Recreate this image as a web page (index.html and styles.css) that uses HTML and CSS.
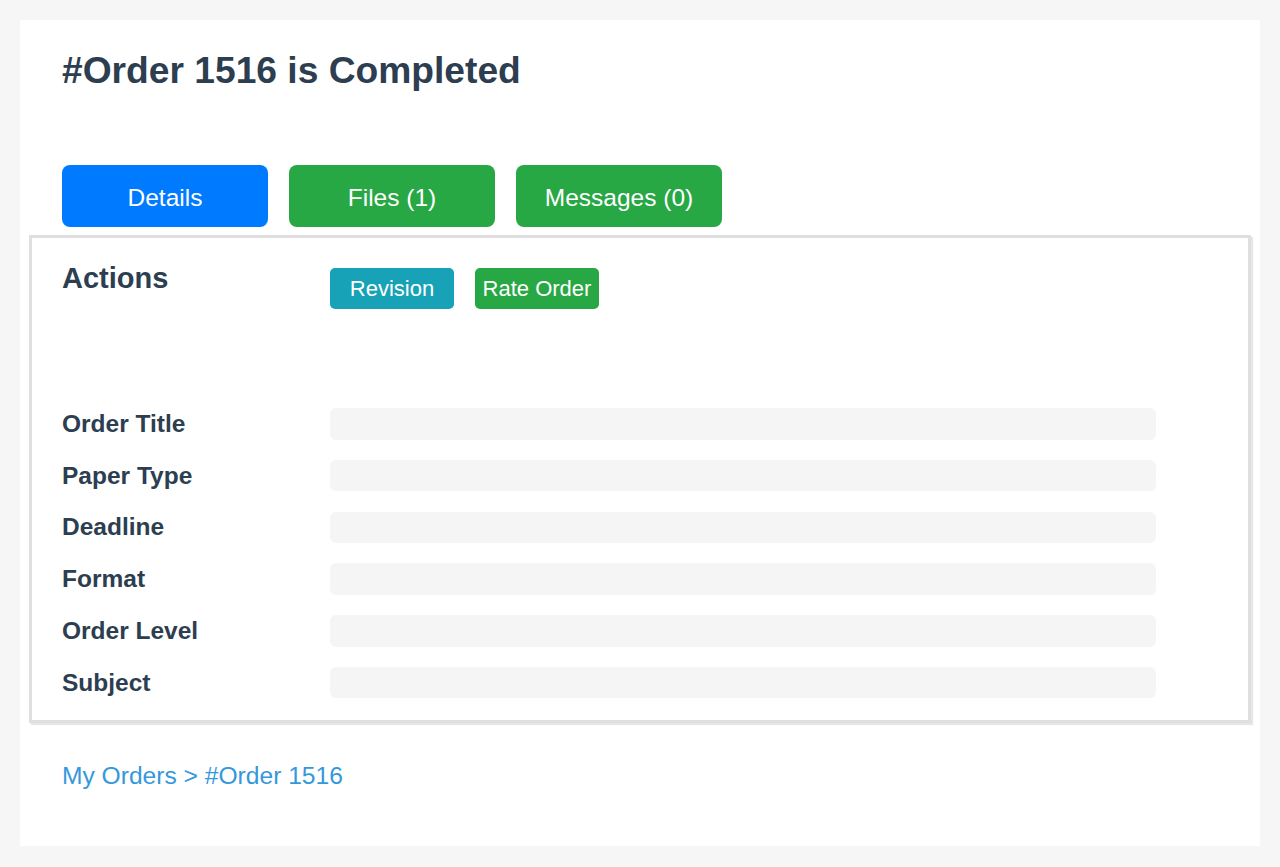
FILE: index.html
```html
<!DOCTYPE html>
<html lang="en">
<head>
<meta charset="utf-8">
<title>#Order 1516 is Completed</title>
<link rel="stylesheet" href="styles.css">
</head>
<body>
<div class="card">
  <h1 class="title">#Order 1516 is Completed</h1>
  <nav class="tabs">
    <a class="tab tab-blue" href="#">Details</a>
    <a class="tab tab-green" href="#">Files (1)</a>
    <a class="tab tab-green" href="#">Messages (0)</a>
  </nav>
  <section class="panel">
    <div class="actions">
      <h2 class="actions-title">Actions</h2>
      <div class="action-buttons">
        <a class="btn btn-teal" href="#">Revision</a>
        <a class="btn btn-green" href="#">Rate Order</a>
      </div>
    </div>
    <div class="rows">
      <div class="row"><span class="label">Order Title</span><span class="value"></span></div>
      <div class="row"><span class="label">Paper Type</span><span class="value"></span></div>
      <div class="row"><span class="label">Deadline</span><span class="value"></span></div>
      <div class="row"><span class="label">Format</span><span class="value"></span></div>
      <div class="row"><span class="label">Order Level</span><span class="value"></span></div>
      <div class="row"><span class="label">Subject</span><span class="value"></span></div>
    </div>
  </section>
  <div class="crumbs"><a href="#">My Orders</a> &gt; <a href="#">#Order 1516</a></div>
</div>
</body>
</html>
```
FILE: styles.css
```css
* { box-sizing: border-box; }
html, body { margin: 0; padding: 0; }
body {
  background: #f6f6f6;
  font-family: "Liberation Sans", Arial, sans-serif;
  color: #2c3e50;
}
.card {
  margin: 20px;
  height: 826px;
  background: #fff;
  padding: 29px 9px 0;
}
.title {
  margin: 0;
  padding-left: 33px;
  font-size: 37.2px;
  font-weight: bold;
  line-height: normal;
  color: #2c3e50;
}
.tabs {
  display: flex;
  gap: 21px;
  padding-left: 33px;
  margin-top: 73px;
}
.tab {
  width: 206px;
  height: 62px;
  border-radius: 8px;
  display: flex;
  align-items: center;
  justify-content: center;
  padding-top: 4px;
  color: #fff;
  text-decoration: none;
  font-size: 24.5px;
}
.tab-blue { background: #007bff; }
.tab-green { background: #28a745; }
.panel {
  margin-top: 8px;
  border: 3px solid #dfdfdf;
  box-shadow: 2px 2px 1px #e6e6e6;
  padding: 26px 30px 22px;
}
.actions {
  display: flex;
  align-items: flex-start;
}
.actions-title {
  width: 268px;
  margin: 0;
  font-size: 29px;
  line-height: 29px;
  font-weight: bold;
}
.action-buttons {
  display: flex;
  gap: 21px;
  margin-top: 4px;
}
.btn {
  width: 124px;
  height: 41px;
  border-radius: 5px;
  display: flex;
  align-items: center;
  justify-content: center;
  color: #fff;
  text-decoration: none;
  font-size: 22px;
}
.btn-teal { background: #17a2b8; }
.btn-green { background: #28a745; }
.rows {
  margin-top: 99px;
  display: flex;
  flex-direction: column;
  gap: 20.3px;
}
.row {
  display: flex;
  align-items: center;
  height: 31.5px;
}
.label {
  width: 268px;
  font-size: 24.5px;
  font-weight: bold;
}
.value {
  width: 826px;
  height: 31.5px;
  background: #f5f5f5;
  border-radius: 6px;
}
.crumbs {
  margin-top: 39px;
  padding-left: 33px;
  font-size: 24.6px;
  color: #3498db;
}
.crumbs a { color: #3498db; text-decoration: none; }
```
